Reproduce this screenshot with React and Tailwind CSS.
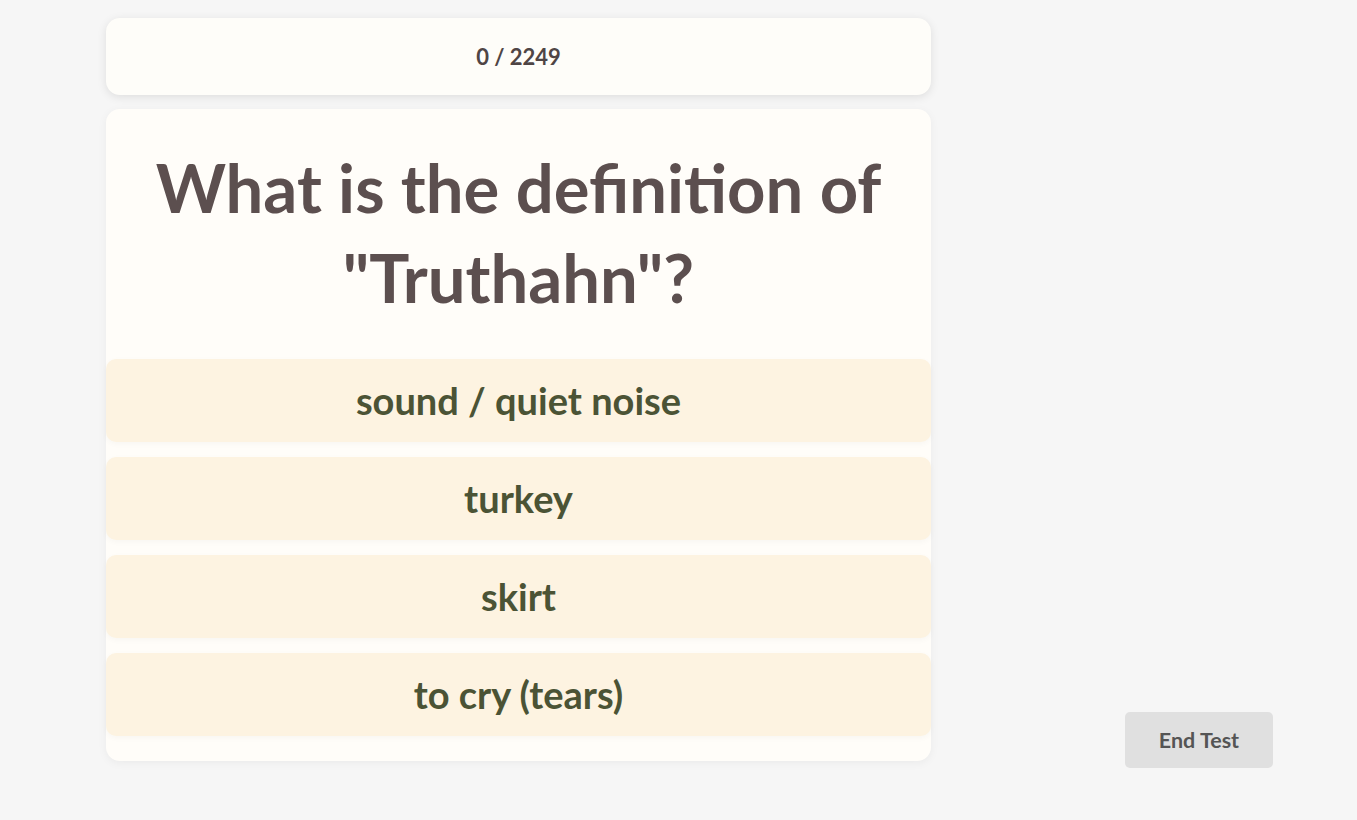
const options = ["sound / quiet noise", "turkey", "skirt", "to cry (tears)"];

export default function App() {
  return (
    <div className="min-h-screen w-full bg-[#f6f6f6]" style={{ fontFamily: "Lato, sans-serif" }}>
      <div className="flex items-end">
        <div className="ml-[106px] mt-[18px] flex w-[825px] flex-col gap-[14px]">
          <div className="flex h-[77px] items-center justify-center rounded-[14px] bg-[#fefdf9] shadow-[0_2px_10px_rgba(0,0,0,0.10)]">
            <span className="text-[22px] font-bold text-[#4f4545]">0 / 2249</span>
          </div>
          <div className="flex flex-col rounded-[14px] bg-[#fffdf9] pb-[25px] shadow-[0_2px_10px_rgba(0,0,0,0.05)]">
            <h1 className="px-6 pt-[33px] pb-[37px] text-center text-[67px] font-bold leading-[90px] text-[#5c4f4f]">
              What is the definition of "Truthahn"?
            </h1>
            <div className="flex flex-col gap-[15px]">
              {options.map((o) => (
                <button
                  key={o}
                  className="flex h-[83px] items-center justify-center rounded-[10px] bg-[#fdf3e1] text-[38px] font-bold text-[#4b5335] shadow-[0_2px_6px_rgba(0,0,0,0.03)]"
                >
                  {o}
                </button>
              ))}
            </div>
          </div>
        </div>
        <button className="mb-[-7px] ml-[194px] flex h-[56px] w-[148px] items-center justify-center rounded-[5px] bg-[#e0e0e0] text-[21.5px] font-bold text-[#555555]">
          End Test
        </button>
      </div>
    </div>
  );
}
